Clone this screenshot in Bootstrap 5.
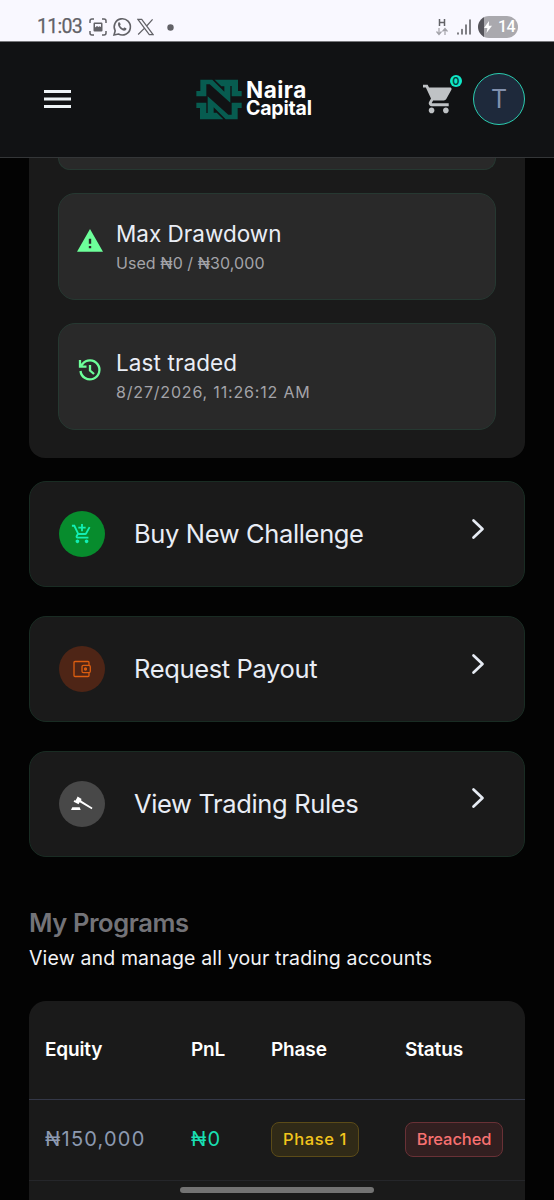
<!DOCTYPE html>
<html lang="en" data-bs-theme="dark">
<head>
<meta charset="utf-8">
<meta name="viewport" content="width=device-width, initial-scale=1">
<title>Naira Capital</title>
<link href="https://cdn.jsdelivr.net/npm/bootstrap@5.3.0/dist/css/bootstrap.min.css" rel="stylesheet">
<style>
html,body{height:1200px;overflow:hidden}
body{background:#030303;color:#e9edf5;font-family:Inter,"Noto Sans",sans-serif;line-height:1}
svg{display:block;flex:none}
.statusbar{height:42px;background:#f9f8ff;color:#626267;padding:12px 36px 0 37px;border-bottom:1px solid #77777b}
.clock{font:400 19.5px/30px Roboto,sans-serif;letter-spacing:-.7px;width:52px;-webkit-text-stroke:.25px currentColor}
.battery{width:40px;height:22px;border-radius:11px;background:linear-gradient(90deg,#55545a 6px,#aaa9ae 6px);color:#fff;font:500 16px/22px Roboto,sans-serif;letter-spacing:-.6px}
.appbar{height:116px;background:#111214;border-bottom:1px solid #343638;padding:0 29px 1px 44px}
.brand-name{font-weight:700;font-size:22.5px;line-height:19px;letter-spacing:.5px;color:#fff}
.brand-name div+div{font-size:19.5px;letter-spacing:-.2px}
.avatar{width:52px;height:52px;border:1.5px solid #2bcdb0;background:#1e293b;color:#8190ad;font-size:25px}
.count{top:-9px;right:-9px;width:12px;height:12px;background:#0fe8c8;color:#06443d;font-size:11px;font-weight:600}
.main-col{padding:0 29px}
.panel{background:#1a1a1a;border-radius:0 0 16px 16px;height:300px;padding:0 29px}
.stat{background:#292929;border:1px solid #263831;border-radius:17px;height:107px;padding:0 19px;margin-bottom:22.5px}
.stat.cut{height:12px;border-top:0;border-radius:0 0 17px 17px;margin-bottom:23px}
.stat>svg{margin:0 1px 12px -1px}
.stat h3{font-size:22.5px;line-height:28px;font-weight:400;margin:1px 0 3px;color:#e9edf5}
.stat p{font-size:16px;line-height:24px;color:#a3a3a8;margin:0;letter-spacing:.06px}
.stat p.date{letter-spacing:.82px}
.action{background:#1a1a1a;border:1px solid #192c23;border-radius:17px;height:106px;margin-bottom:29px;padding:0 39px 0 29px}
.disc{width:46px;height:46px;margin-right:29px}
.action span{font-size:25.5px;line-height:32px;letter-spacing:-.36px}
.programs h2{font-size:25.5px;font-weight:600;line-height:32px;color:#737378;margin:0;letter-spacing:-.42px}
.programs p{font-size:19.5px;line-height:28px;color:#f2f2f5;margin:0;letter-spacing:.15px}
.accounts{background:#1a1a1a;border-radius:17px 17px 0 0;height:200px}
.line-row{display:grid;grid-template-columns:146px 80px 134px 1fr;align-items:center;padding:0 0 0 16px}
.line-head{height:99px;border-bottom:1px solid #343848;font-size:19px;font-weight:600;color:#fff;letter-spacing:-.15px}
.line-body{height:81px;border-bottom:1px solid #25262a;font-size:20px;color:#8c99b0;letter-spacing:1.2px;padding-bottom:1px}
.pill{display:inline-flex;align-items:center;justify-content:center;height:35px;border-radius:8px;border:1px solid;font-size:16.5px;font-weight:500}
.phase{width:88px;color:#f3c51c;background:#302a17;border-color:#5b4b18;letter-spacing:.6px}
.breach{width:98px;color:#f87171;background:#321f20;border-color:#693136;letter-spacing:-.1px}
.gesture{left:180px;top:1187px;width:194px;height:6px;border-radius:3px;background:#737373}
</style>
</head>
<body>
<div class="statusbar d-flex align-items-start justify-content-between">
  <div class="d-flex align-items-center" style="height:30px">
    <span class="clock">11:03</span>
    <svg width="18" height="18" viewBox="0 0 18 18" fill="none" stroke="currentColor" stroke-width="1.5"><path d="M1 5V3a2 2 0 0 1 2-2h2M13 1h2a2 2 0 0 1 2 2v2M17 13v2a2 2 0 0 1-2 2h-2M5 17H3a2 2 0 0 1-2-2v-2"/><path fill="currentColor" fill-rule="evenodd" stroke="none" d="M5.500 4.500h7a1 1 0 0 1 1 1v7a1 1 0 0 1-1 1h-7a1 1 0 0 1-1-1v-7a1 1 0 0 1 1-1zM6 6v3.500l2-1.500 1.500 1 1-.7L12 9V6z"/></svg>
    <svg style="margin-left:5px" width="20" height="20" viewBox="0 0 20 20" fill="none" stroke="currentColor" stroke-width="1.6"><path d="M2 18l1.2-4.2A8.1 8.1 0 1 1 6.4 17z"/><path d="M6.400 5.600c.6-.7 1.300-.5 1.600.2l.6 1.400c.2.5-.5 1-.6 1.300.5 1.200 1.900 2.400 3.200 2.900.4-.2.900-1.100 1.400-.9l1.600.8c.5.3.2 1.500-.5 2-3 2-9.300-3.700-7.300-7.700z" fill="currentColor" stroke="none"/></svg>
    <svg style="margin-left:5px" width="17" height="18" viewBox="0 0 18 18" fill="none" stroke="currentColor" stroke-width="1.3"><path d="M1 1h4l12 16h-4zM16.500 1L10 8.200M8 10.200L1.200 17"/></svg>
    <svg style="margin-left:13px" width="7" height="7"><circle cx="3.500" cy="3.500" r="3.200" fill="currentColor"/></svg>
  </div>
  <div class="d-flex align-items-center" style="height:30px">
    <svg width="14" height="18" viewBox="0 0 14 18" fill="none" stroke="currentColor"><path d="M4.500 1v7M9.500 1v7M4.500 4.500h5" stroke-width="1.500"/><path d="M4 10v6M1.500 13.500L4 16.500l2.500-3M10 17v-6M7.500 13.500L10 10.500l2.500 3" stroke="#a2a2a8" stroke-width="1.200"/></svg>
    <svg style="margin-left:7px" width="16" height="16" viewBox="0 0 16 16" stroke="currentColor" stroke-width="1.600" stroke-linecap="round"><path d="M2 14v1M6 10.500V15M10 6v9M14 1v14"/></svg>
    <div class="battery d-flex align-items-center" style="margin-left:6px"><svg style="margin:0 6px" width="8" height="12" viewBox="0 0 8 12"><path d="M5 0L0 7h3.400L2.500 12 8 4.700H4.800z" fill="#fff"/></svg>14</div>
  </div>
</div>

<header class="appbar d-flex align-items-center">
  <svg width="27" height="18" fill="#eef3f6"><path d="M0 0h27v3H0zM0 7.500h27v3H0zM0 15h27v3H0z"/></svg>
  <div class="d-flex align-items-center" style="margin-left:125px">
    <svg width="46" height="41" viewBox="49 56 138 123" fill="#075c50"><path id="half" d="M50 92H62V58H98L134 94V78H125L105 58H175V92H186V108H156V77H152V127L90 72H80V108H50z"/><use href="#half" transform="rotate(180 118 117.500)"/></svg>
    <div class="brand-name" style="margin-left:4px"><div>Naira</div><div>Capital</div></div>
  </div>
  <div class="position-relative ms-auto" style="margin-right:20px">
    <svg width="30" height="30" viewBox="1 2 21 20" fill="#bfc2c5"><path d="M7 18c-1.100 0-1.990.9-1.990 2S5.900 22 7 22s2-.9 2-2-.9-2-2-2zM1 2v2h2l3.600 7.590-1.350 2.450c-.16.280-.25.610-.25.960 0 1.100.9 2 2 2h12v-2H7.420c-.14 0-.25-.11-.25-.25l.03-.12.9-1.630h7.450c.75 0 1.410-.41 1.750-1.030l3.580-6.490c.080-.14.120-.31.120-.480 0-.55-.45-1-1-1H5.210l-.94-2H1zm16 16c-1.100 0-1.990.9-1.990 2s.89 2 1.990 2 2-.9 2-2-.9-2-2-2z"/></svg>
    <div class="count rounded-circle position-absolute d-flex align-items-center justify-content-center">0</div>
  </div>
  <div class="avatar rounded-circle d-flex align-items-center justify-content-center">T</div>
</header>

<main class="main-col">
  <section class="panel">
    <div class="stat cut"></div>
    <div class="stat d-flex align-items-center">
      <svg width="26" height="26" viewBox="0 0 24 24" fill="#6dff9a"><path d="M0 22h24L12 1zm13.100-3.300h-2.200v-2.100h2.200zm0-4.200h-2.200V10h2.200z"/></svg>
      <div style="margin-left:12px"><h3>Max Drawdown</h3><p>Used ₦0 / ₦30,000</p></div>
    </div>
    <div class="stat d-flex align-items-center">
      <svg width="26" height="26" viewBox="0 0 26 26" fill="none" stroke="#6dff9a" stroke-width="2.300"><path d="M3.500 14a9.500 9.500 0 1 0 2-7L3 9.500M3 3v6.700h6.500M13 8v5.500l4 3.500"/></svg>
      <div style="margin-left:12px"><h3 style="letter-spacing:.1px">Last traded</h3><p class="date">8/27/2026, 11:26:12 AM</p></div>
    </div>
  </section>

  <section style="padding-top:23px">
    <div class="action d-flex align-items-center">
      <div class="disc rounded-circle d-flex align-items-center justify-content-center" style="background:#078c2d"><svg width="22" height="22" viewBox="0 0 24 24" fill="#12efb4"><path d="M11 9h2V6h3V4h-3V1h-2v3H8v2h3v3zm-4 9c-1.100 0-1.990.9-1.990 2S5.900 22 7 22s2-.9 2-2-.9-2-2-2zm10 0c-1.100 0-1.990.9-1.990 2s.89 2 1.990 2 2-.9 2-2-.9-2-2-2zm-8.900-5h7.450c.75 0 1.410-.41 1.750-1.030l3.860-7.010L19.420 4l-3.870 7H8.530L4.270 2H1v2h2l3.600 7.590-1.350 2.440C4.520 15.370 5.480 17 7 17h12v-2H7l1.100-2z"/></svg></div>
      <span>Buy New Challenge</span>
      <svg class="ms-auto" style="margin-bottom:11px" width="14" height="22" viewBox="0 0 14 22" fill="none" stroke="#e6ebf3" stroke-width="2.700" stroke-linecap="round" stroke-linejoin="round"><path d="M2.500 2.500L11.500 11l-9 8.500"/></svg>
    </div>
    <div class="action d-flex align-items-center">
      <div class="disc rounded-circle d-flex align-items-center justify-content-center" style="background:#4e2516"><svg width="18" height="18" viewBox="0 0 18 18" fill="none" stroke="#dc5e10" stroke-width="1.300"><path d="M16 5V2.500a1 1 0 0 0-1-1H2a1 1 0 0 0-1 1v13a1 1 0 0 0 1 1h13a1 1 0 0 0 1-1V13"/><rect x="9" y="5.300" width="8.300" height="7.400" rx="1.500"/><circle cx="12.500" cy="9" r="1" fill="#dc5e10"/></svg></div>
      <span>Request Payout</span>
      <svg class="ms-auto" style="margin-bottom:11px" width="14" height="22" viewBox="0 0 14 22" fill="none" stroke="#e6ebf3" stroke-width="2.700" stroke-linecap="round" stroke-linejoin="round"><path d="M2.500 2.500L11.500 11l-9 8.500"/></svg>
    </div>
    <div class="action d-flex align-items-center">
      <div class="disc rounded-circle d-flex align-items-center justify-content-center" style="background:#484848"><svg width="24" height="18" viewBox="0 0 24 18" fill="#fff"><path d="M7.600 1.500l4 2.400-.5.900.3.900L22.500 12.800l-.8 1.400L10.200 7.500l-.9 0-.7 1.700-5-2.500.7-1.400 1.200.2 1.500-2.500zM2.300 12.300h7.400l1 2.700H1z"/></svg></div>
      <span>View Trading Rules</span>
      <svg class="ms-auto" style="margin-bottom:12px" width="14" height="22" viewBox="0 0 14 22" fill="none" stroke="#e6ebf3" stroke-width="2.700" stroke-linecap="round" stroke-linejoin="round"><path d="M2.500 2.500L11.500 11l-9 8.500"/></svg>
    </div>
  </section>

  <section class="programs" style="padding-top:21px">
    <h2>My Programs</h2>
    <p style="padding-top:5px">View and manage all your trading accounts</p>
    <div class="accounts" style="margin-top:28.500px">
      <div class="line-row line-head"><div>Equity</div><div>PnL</div><div>Phase</div><div>Status</div></div>
      <div class="line-row line-body"><div>₦150,000</div><div style="color:#19dfb2">₦0</div><div><span class="pill phase">Phase 1</span></div><div><span class="pill breach">Breached</span></div></div>
    </div>
  </section>
</main>
<div class="gesture position-absolute"></div>
<script src="https://cdn.jsdelivr.net/npm/bootstrap@5.3.0/dist/js/bootstrap.bundle.min.js"></script>
</body>
</html>
